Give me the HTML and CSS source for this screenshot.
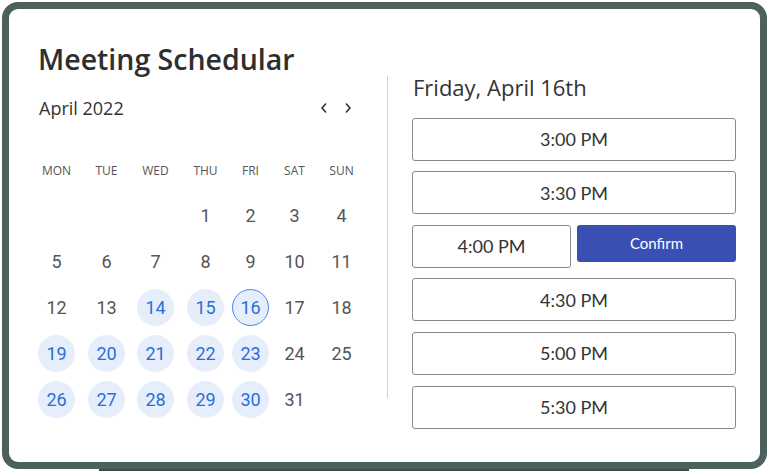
FILE: index.html
```html
<!DOCTYPE html>
<html lang="en">
<head>
  <meta charset="UTF-8" />
  <meta name="viewport" content="width=device-width, initial-scale=1.0"/>
  <title>Meeting Schedular</title>
  <link rel="stylesheet" href="styles.css">
</head>
<body>
  <div class="device">
    <h1>Meeting Schedular</h1>

    <div class="panes">
      <div class="calendar">
        <div class="month">
          <span>April 2022</span>
          <div class="nav">
            <svg width="8" height="12" viewBox="0 0 8 12"><path d="M6 1.5 L2 6 L6 10.5" /></svg>
            <svg width="8" height="12" viewBox="0 0 8 12"><path d="M2 1.5 L6 6 L2 10.5" /></svg>
          </div>
        </div>

        <div class="days">
          <div class="dow">MON</div>
          <div class="dow">TUE</div>
          <div class="dow">WED</div>
          <div class="dow">THU</div>
          <div class="dow">FRI</div>
          <div class="dow">SAT</div>
          <div class="dow">SUN</div>

          <div></div><div></div><div></div>
          <div class="day">1</div>
          <div class="day">2</div>
          <div class="day">3</div>
          <div class="day">4</div>

          <div class="day">5</div>
          <div class="day">6</div>
          <div class="day">7</div>
          <div class="day">8</div>
          <div class="day">9</div>
          <div class="day">10</div>
          <div class="day">11</div>

          <div class="day">12</div>
          <div class="day">13</div>
          <div class="day open">14</div>
          <div class="day open">15</div>
          <div class="day open selected">16</div>
          <div class="day">17</div>
          <div class="day">18</div>

          <div class="day open">19</div>
          <div class="day open">20</div>
          <div class="day open">21</div>
          <div class="day open">22</div>
          <div class="day open">23</div>
          <div class="day">24</div>
          <div class="day">25</div>

          <div class="day open">26</div>
          <div class="day open">27</div>
          <div class="day open">28</div>
          <div class="day open">29</div>
          <div class="day open">30</div>
          <div class="day">31</div>
        </div>
      </div>

      <div class="divider"></div>

      <div class="times">
        <h2>Friday, April 16th</h2>
        <button class="slot">3:00 PM</button>
        <button class="slot">3:30 PM</button>
        <div class="picked">
          <button class="slot">4:00 PM</button>
          <button class="confirm">Confirm</button>
        </div>
        <button class="slot">4:30 PM</button>
        <button class="slot">5:00 PM</button>
        <button class="slot">5:30 PM</button>
      </div>
    </div>
  </div>
  <div class="base"></div>
</body>
</html>
```

FILE: styles.css
```css
body { margin: 0; background: #fff; font-family: "Open Sans", Lato, sans-serif; color: #333; }

.device { box-sizing: border-box; width: 765px; height: 467px; margin: 2px 0 0 2px; border: 7px solid #4c605d; border-radius: 16px; background: #fff; padding: 33px 20px 0 29px; position: relative; z-index: 1; }
.base { width: 590px; height: 8px; margin: -5px 0 0 99px; background: #3c4e4b; }

h1 { margin: 0; font-size: 28.5px; line-height: 34px; font-weight: 600; color: #2e2e2e; letter-spacing: 0; }

.panes { display: flex; margin-top: 0; }

.calendar { width: 323px; }
.month { display: flex; justify-content: space-between; align-items: center; margin-top: 20px; height: 24px; font-size: 18px; color: #333; padding-left: 1px; }
.nav { display: flex; gap: 16px; margin-right: 9px; }
.nav svg path { fill: none; stroke: #333; stroke-width: 1.6; }

.days { display: grid; grid-template-columns: 50px 49px 50px 45px 44px 47px 38px; grid-template-rows: 27px; grid-auto-rows: 37px; row-gap: 9px; margin-top: 41px; }
.dow { width: 37px; text-align: center; font-size: 12px; line-height: 20px; color: #555; align-self: start; }
.day { width: 37px; height: 37px; border-radius: 50%; display: flex; align-items: center; justify-content: center; font-family: Roboto, sans-serif; font-size: 18px; color: #555; box-sizing: border-box; }
.day.open { background: #e6eefb; color: #2a6fd8; }
.day.selected { border: 1px solid #4a86e8; }

.divider { width: 1px; height: 322px; background: #d0d0d0; margin-left: 26px; margin-top: 0; }

.times { width: 324px; margin-left: 24px; display: flex; flex-direction: column; gap: 10.6px; }
h2 { margin: -2px 0 7px 1px; font-size: 22px; line-height: 26px; font-weight: 400; color: #333; }
.slot { height: 43px; width: 100%; background: #fff; border: 1px solid #8a8a8a; border-radius: 3px; font-family: Lato, "Open Sans", sans-serif; font-size: 18px; color: #333; }
.picked { display: flex; gap: 6px; align-items: flex-start; }
.picked .slot { width: 159px; flex: none; }
.confirm { flex: 1; height: 37px; background: #394fb4; color: #fff; border: 0; border-radius: 3px; font-family: Lato, "Open Sans", sans-serif; font-size: 15px; }
```
